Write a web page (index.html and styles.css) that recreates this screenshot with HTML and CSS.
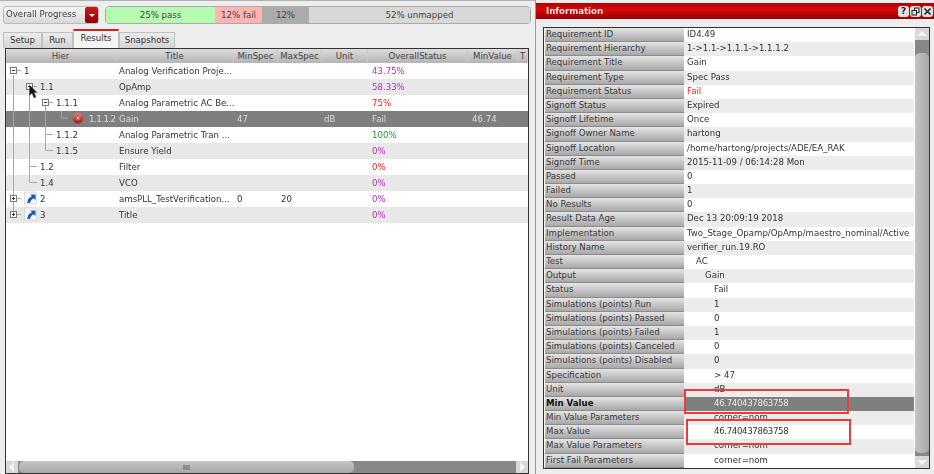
FILE: index.html
```html
<!DOCTYPE html>
<html lang="en">
<head>
    <meta charset="UTF-8">
    <title>Verification Results</title>
    <link rel="stylesheet" href="styles.css">
</head>
<body>
    <div class="page">
        <div class="main">
            <div class="progress">
                <div class="combo"><span class="combo-text">Overall Progress</span><span class="combo-btn"></span></div>
                <div class="bar">
                    <div class="seg seg-pass">25% pass</div>
                    <div class="seg seg-fail">12% fail</div>
                    <div class="seg seg-mid">12%</div>
                    <div class="seg seg-none">52% unmapped</div>
                </div>
            </div>
            <div class="tabs">
                <div class="tab tab-setup">Setup</div>
                <div class="tab tab-run">Run</div>
                <div class="tab tab-results">Results</div>
                <div class="tab tab-snap">Snapshots</div>
            </div>
            <div class="results">
                <div class="row head">
                    <div>Hier</div><div>Title</div><div>MinSpec</div><div>MaxSpec</div><div>Unit</div><div>OverallStatus</div><div>MinValue</div><div>T</div>
                </div>
                <div class="tree">
                    <div class="row"><div class="lv0">1</div><div>Analog Verification Proje...</div><div></div><div></div><div></div><div class="st purple">43.75%</div><div></div><div></div></div>
                    <div class="row alt"><div class="lv1">1.1</div><div>OpAmp</div><div></div><div></div><div></div><div class="st purple">58.33%</div><div></div><div></div></div>
                    <div class="row"><div class="lv2">1.1.1</div><div>Analog Parametric AC Be...</div><div></div><div></div><div></div><div class="st red">75%</div><div></div><div></div></div>
                    <div class="row sel"><div class="lv3">1.1.1.2</div><div>Gain</div><div>47</div><div></div><div class="unit">dB</div><div class="st">Fail</div><div class="st">46.74</div><div></div></div>
                    <div class="row"><div class="lv2">1.1.2</div><div>Analog Parametric Tran ...</div><div></div><div></div><div></div><div class="st green">100%</div><div></div><div></div></div>
                    <div class="row alt"><div class="lv2">1.1.5</div><div>Ensure Yield</div><div></div><div></div><div></div><div class="st purple">0%</div><div></div><div></div></div>
                    <div class="row"><div class="lv1">1.2</div><div>Filter</div><div></div><div></div><div></div><div class="st red">0%</div><div></div><div></div></div>
                    <div class="row alt"><div class="lv1">1.4</div><div>VCO</div><div></div><div></div><div></div><div class="st purple">0%</div><div></div><div></div></div>
                    <div class="row"><div class="lv1">2</div><div>amsPLL_TestVerification...</div><div>0</div><div>20</div><div></div><div class="st purple">0%</div><div></div><div></div></div>
                    <div class="row alt"><div class="lv1">3</div><div>Title</div><div></div><div></div><div></div><div class="st purple">0%</div><div></div><div></div></div>
                    <svg class="tree-lines" width="110" height="166" viewBox="0 0 110 166">
                        <defs>
                            <linearGradient id="ball" x1="0" y1="0" x2="0" y2="1"><stop offset="0" stop-color="#e87878"/><stop offset="1" stop-color="#a81818"/></linearGradient>
                            <g id="shortcut">
                                <rect x="0" y="0" width="12" height="12" fill="#f4f6fa" stroke="#c8ccd4" stroke-width="0.6"/>
                                <path d="M3 11 C3 7 5 5 7.5 4.5 L6 2.5 L11 2.5 L11 8 L9 6.3 C7.5 7 6 8.5 5.5 11 Z" fill="#1c5aa8"/>
                            </g>
                        </defs>
                        <g stroke="#a8a8a8" stroke-width="1" fill="none">
                            <path d="M13.5 12 V150 M13.5 7.5 H21 M29.5 24 V119 M29.5 23.5 H37 M45.5 40 V88 M45.5 39.5 H53 M61.5 48 V55 H68 M45.5 71.5 H53 M45.5 87.5 H53 M29.5 103.5 H37 M29.5 119.5 H37 M13.5 135.5 H21 M13.5 151.5 H21"/>
                        </g>
                        <g fill="#fff" stroke="#777" stroke-width="1">
                            <rect x="10.5" y="4.5" width="6" height="6"/>
                            <rect x="26.5" y="20.5" width="6" height="6"/>
                            <rect x="42.5" y="36.5" width="6" height="6"/>
                            <rect x="10.5" y="132.5" width="6" height="6"/>
                            <rect x="10.5" y="148.5" width="6" height="6"/>
                        </g>
                        <path d="M12 7.5 H15 M28 23.5 H31 M44 39.5 H47 M12 135.5 H15 M13.5 134 V137 M12 151.5 H15 M13.5 150 V153" stroke="#333" stroke-width="1"/>
                        <circle cx="78" cy="55" r="5.5" fill="url(#ball)"/>
                        <path d="M76.5 53.5 L79.5 56.5 M79.5 53.5 L76.5 56.5" stroke="#f0c0c0" stroke-width="1"/>
                        <use href="#shortcut" x="24.5" y="129"/>
                        <use href="#shortcut" x="24.5" y="145"/>
                        <path d="M29.5 22 V32.5 L32 30 L34 35 L36 34 L34 29.5 L37 29.5 Z" fill="#111" stroke="#555" stroke-width="0.4"/>
                    </svg>
                </div>
                <div class="hscroll">
                    <span class="arrow arrow-left"></span>
                    <div class="hthumb"><span class="grip"></span></div>
                    <span class="arrow arrow-right"></span>
                </div>
            </div>
        </div>
        <div class="info">
            <div class="titlebar">
                <span class="title-text">Information</span>
                <span class="win-btns">
                    <span class="win-btn">?</span>
                    <span class="win-btn">
                        <svg width="9" height="9" viewBox="0 0 9 9" fill="none" stroke="#222" stroke-width="1"><rect x="3.5" y="1" width="4.5" height="4.5"/><rect x="1" y="3.5" width="4.5" height="4.5" fill="#e0e0e0"/></svg>
                    </span>
                    <span class="win-btn">
                        <svg width="9" height="9" viewBox="0 0 9 9" fill="none" stroke="#222" stroke-width="1.6"><path d="M1.5 1.5 L7.5 7.5 M7.5 1.5 L1.5 7.5"/></svg>
                    </span>
                </span>
            </div>
            <div class="info-frame">
                <div class="props">
                    <div class="prop"><div class="key">Requirement ID</div><div class="val">ID4.49</div></div>
                    <div class="prop alt"><div class="key">Requirement Hierarchy</div><div class="val">1-&gt;1.1-&gt;1.1.1-&gt;1.1.1.2</div></div>
                    <div class="prop"><div class="key">Requirement Title</div><div class="val">Gain</div></div>
                    <div class="prop alt"><div class="key">Requirement Type</div><div class="val">Spec Pass</div></div>
                    <div class="prop"><div class="key">Requirement Status</div><div class="val red">Fail</div></div>
                    <div class="prop alt"><div class="key">Signoff Status</div><div class="val">Expired</div></div>
                    <div class="prop"><div class="key">Signoff Lifetime</div><div class="val">Once</div></div>
                    <div class="prop alt"><div class="key">Signoff Owner Name</div><div class="val">hartong</div></div>
                    <div class="prop"><div class="key">Signoff Location</div><div class="val">/home/hartong/projects/ADE/EA_RAK</div></div>
                    <div class="prop alt"><div class="key">Signoff Time</div><div class="val">2015-11-09 / 06:14:28 Mon</div></div>
                    <div class="prop"><div class="key">Passed</div><div class="val">0</div></div>
                    <div class="prop alt"><div class="key">Failed</div><div class="val">1</div></div>
                    <div class="prop"><div class="key">No Results</div><div class="val">0</div></div>
                    <div class="prop alt"><div class="key">Result Data Age</div><div class="val">Dec 13 20:09:19 2018</div></div>
                    <div class="prop"><div class="key">Implementation</div><div class="val">Two_Stage_Opamp/OpAmp/maestro_nominal/Active</div></div>
                    <div class="prop alt"><div class="key">History Name</div><div class="val">verifier_run.19.RO</div></div>
                    <div class="prop"><div class="key">Test</div><div class="val in1">AC</div></div>
                    <div class="prop alt"><div class="key">Output</div><div class="val in2">Gain</div></div>
                    <div class="prop"><div class="key">Status</div><div class="val in3">Fail</div></div>
                    <div class="prop alt"><div class="key">Simulations (points) Run</div><div class="val in3">1</div></div>
                    <div class="prop"><div class="key">Simulations (points) Passed</div><div class="val in3">0</div></div>
                    <div class="prop alt"><div class="key">Simulations (points) Failed</div><div class="val in3">1</div></div>
                    <div class="prop"><div class="key">Simulations (points) Canceled</div><div class="val in3">0</div></div>
                    <div class="prop alt"><div class="key">Simulations (points) Disabled</div><div class="val in3">0</div></div>
                    <div class="prop"><div class="key">Specification</div><div class="val in3">&gt; 47</div></div>
                    <div class="prop alt"><div class="key">Unit</div><div class="val in3">dB</div></div>
                    <div class="prop sel"><div class="key">Min Value</div><div class="val in3 num">46.740437863758</div></div>
                    <div class="prop alt"><div class="key">Min Value Parameters</div><div class="val in3">corner=nom</div></div>
                    <div class="prop"><div class="key">Max Value</div><div class="val in3 num">46.740437863758</div></div>
                    <div class="prop alt"><div class="key">Max Value Parameters</div><div class="val in3">corner=nom</div></div>
                    <div class="prop"><div class="key">First Fail Parameters</div><div class="val in3">corner=nom</div></div>
                </div>
                <div class="vscroll">
                    <span class="arrow arrow-up"></span>
                    <div class="vthumb"></div>
                    <span class="arrow arrow-down"></span>
                </div>
            </div>
            <div class="mark mark-min"></div>
            <div class="mark mark-max"></div>
        </div>
    </div>
</body>
</html>
```

FILE: styles.css
```css
html, body {
    margin: 0;
    padding: 0;
    background: #ededed;
    overflow: hidden;
}
.page {
    display: flex;
    width: 934px;
    height: 474px;
    font-family: "DejaVu Sans", sans-serif;
    font-size: 8.6px;
    color: #333;
    filter: blur(0.3px);
}

/* left side */
.main {
    width: 535px;
    padding-top: 5px;
    box-sizing: border-box;
    border-top: 1px solid #b0b0b0;
}
.progress {
    display: flex;
    gap: 6px;
    height: 18px;
    padding: 0 4px 0 3px;
}
.combo {
    display: flex;
    width: 96px;
    box-sizing: border-box;
    border: 1px solid #bbb;
    border-radius: 3px;
    background: linear-gradient(#f4f4f4, #d8d8d8);
}
.combo-text {
    flex: 1;
    padding-left: 2px;
    line-height: 15px;
    color: #444;
}
.combo-btn {
    position: relative;
    width: 13px;
    border-radius: 2px;
    background: linear-gradient(#d01818, #880000);
}
.combo-btn::after {
    content: "";
    position: absolute;
    left: 4px;
    top: 7px;
    border: 3px solid transparent;
    border-top-color: #fff;
    border-bottom: 0;
}
.bar {
    display: flex;
    flex: 1;
    overflow: hidden;
    border: 1px solid #aaa;
    border-radius: 4px;
}
.seg {
    text-align: center;
    line-height: 16px;
    color: #444;
}
.seg-pass { width: 109px; background: #b4fbb0; }
.seg-fail { width: 47px; background: #ffb4b4; }
.seg-mid { width: 47px; background: #ababab; }
.seg-none { flex: 1; background: #d8d8d8; }

.tabs {
    display: flex;
    height: 19px;
    margin-top: 5px;
    padding-left: 3px;
    align-items: flex-end;
}
.tab {
    height: 16px;
    box-sizing: border-box;
    border: 1px solid #c0c0c0;
    border-bottom: 0;
    background: linear-gradient(#ececec, #d4d4d4);
    text-align: center;
    line-height: 15px;
}
.tab-setup { width: 39px; }
.tab-run { width: 31px; }
.tab-results {
    width: 46px;
    height: 19px;
    border-top: 2px solid #d02020;
    background: #f4f4f4;
    line-height: 15px;
}
.tab-snap { width: 56px; }

.results {
    display: flex;
    flex-direction: column;
    height: 426px;
    margin: 0 6px 0 5px;
    box-sizing: border-box;
    border: 1px solid #333;
    background: #fff;
}
.row {
    display: grid;
    grid-template-columns: 110px 118px 44px 44px 46px 100px 50px 10px;
    height: 16px;
    line-height: 16px;
    white-space: nowrap;
}
.row > div {
    overflow: hidden;
    padding-left: 3px;
}
.row.alt { background: #e8e8e8; }
.row.sel { background: #7f7f7f; color: #ddd; }
.head {
    height: 14px;
    line-height: 15px;
    background: linear-gradient(#dcdcdc, #b4b4b4);
    color: #444;
}
.row.head > div {
    padding: 0;
    text-align: center;
    border-right: 1px solid #ccc;
}
.tree {
    position: relative;
    flex: 1;
}
.tree-lines {
    position: absolute;
    left: -6px;
    top: 0;
    pointer-events: none;
}
.row > .lv0 { padding-left: 18px; }
.row > .lv1 { padding-left: 34px; }
.row > .lv2 { padding-left: 50px; }
.row > .lv3 { padding-left: 83px; letter-spacing: -0.5px; }
.row > .unit { padding-left: 2px; }
.row > .st { padding-left: 4px; }
.purple { color: #b030c0; }
.red { color: #f82020; }
.green { color: #20a030; }

.hscroll {
    display: flex;
    height: 12px;
    background: #888;
}
.hthumb {
    display: flex;
    width: 335px;
    margin-left: 1px;
    justify-content: center;
    align-items: center;
    border-radius: 5px;
    background: linear-gradient(#c4c4c4, #a8a8a8);
}
.grip {
    width: 7px;
    height: 5px;
    background: #8c8c8c;
}
.arrow {
    position: relative;
    flex: none;
    width: 12px;
    height: 12px;
    background: #d8d8d8;
}
.arrow::after {
    content: "";
    position: absolute;
    border: 5px solid transparent;
}
.arrow-left::after { left: -2px; top: 1px; border-right-color: #f4f4f4; }
.arrow-right { margin-left: auto; }
.arrow-right::after { left: 4px; top: 1px; border-left-color: #f4f4f4; }
.arrow-up::after { left: 2px; top: -2px; border-bottom-color: #f4f4f4; }
.arrow-down::after { left: 2px; top: 4px; border-top-color: #f4f4f4; }

/* information window */
.info {
    position: relative;
    flex: 1;
    padding-top: 3px;
    border-left: 1px solid #999;
    box-sizing: border-box;
}
.titlebar {
    display: flex;
    justify-content: space-between;
    align-items: center;
    height: 16px;
    padding: 0 1px 0 10px;
    background: linear-gradient(#b00000, #d80808 40%, #980000);
    color: #f4e0e0;
    font-weight: bold;
}
.win-btns {
    display: flex;
    gap: 1px;
}
.win-btn {
    display: flex;
    justify-content: center;
    align-items: center;
    width: 11px;
    height: 11px;
    border-radius: 3px;
    background: #e0e0e0;
    color: #222;
    font-size: 9px;
    line-height: 11px;
}
.info-frame {
    display: flex;
    height: 442px;
    margin: 8px 4px 0 7px;
    box-sizing: border-box;
    border: 1px solid #333;
    background: #fff;
}
.props {
    flex: 1;
    padding-left: 1px;
}
.prop {
    display: grid;
    grid-template-columns: 139px 1fr;
    height: 14.2px;
    line-height: 12px;
    white-space: nowrap;
}
.prop.alt .val { background: #ececec; }
.key {
    padding-left: 1px;
    border-bottom: 1px solid #8c8c8c;
    box-sizing: border-box;
    background: linear-gradient(#e4e4e4, #a8a8a8);
    color: #3a3a3a;
}
.val {
    padding-left: 3px;
    overflow: hidden;
}
.prop.sel .key { font-weight: bold; color: #111; }
.prop.sel .val { background: #7f7f7f; color: #e8e8e8; }
.val.in1 { padding-left: 12px; }
.val.in2 { padding-left: 21px; }
.val.in3 { padding-left: 30px; }
.val.num { letter-spacing: -0.33px; }
.vscroll {
    display: flex;
    flex-direction: column;
    width: 14px;
    margin-left: 1px;
    background: #888;
}
.vthumb {
    height: 400px;
    margin: 13px 0 1px;
    border-radius: 5px;
    background: linear-gradient(90deg, #c4c4c4, #a8a8a8);
}
.arrow-up, .arrow-down { width: 14px; }
.arrow-down { margin-top: auto; }
.mark {
    position: absolute;
    width: 165px;
    box-sizing: border-box;
    border: 2px solid #f03a3a;
}
.mark-min { left: 148px; top: 389px; height: 25px; }
.mark-max { left: 150px; top: 419px; height: 26px; }
```
